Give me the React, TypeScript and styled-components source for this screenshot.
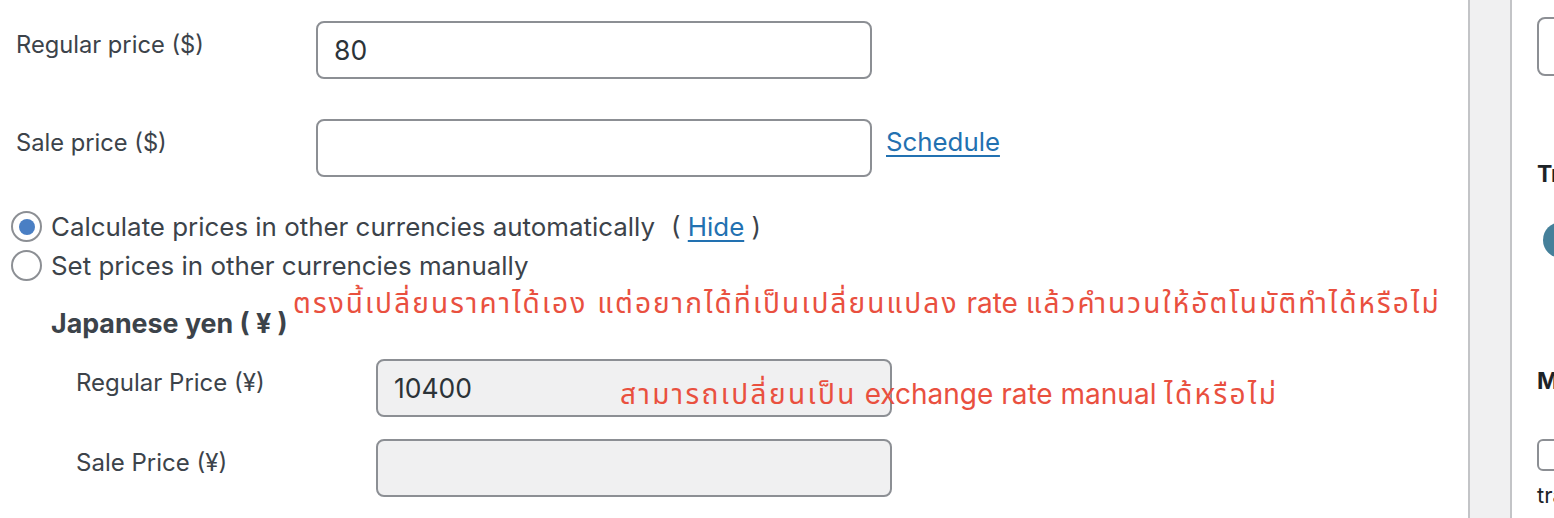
import React from "react";
import styled, { createGlobalStyle } from "styled-components";

const GlobalStyle = createGlobalStyle`
  html, body {
    margin: 0;
    padding: 0;
    background: #ffffff;
    overflow: hidden;
  }
  body {
    font-family: Inter, "Noto Sans", "Noto Sans Thai", "Liberation Sans", sans-serif;
    color: #3c434a;
  }
`;

const Page = styled.div`
  display: grid;
  grid-template-columns: 1468px 44px 1fr;
  width: 1554px;
  height: 518px;
  overflow: hidden;
`;

const Main = styled.div`
  position: relative;
  padding-top: 21px;
  display: flex;
  flex-direction: column;
`;

const Gutter = styled.div`
  background: #f0f0f1;
  border-left: 2px solid #c3c4c7;
  border-right: 2px solid #c3c4c7;
`;

const Side = styled.div`
  padding: 17px 0 0 25px;
  display: flex;
  flex-direction: column;
  overflow: hidden;
  white-space: nowrap;
`;

const FieldRow = styled.div<{ $indent?: number; $gap?: number }>`
  display: flex;
  align-items: flex-start;
  padding-left: ${(p) => p.$indent ?? 16}px;
  margin-bottom: ${(p) => p.$gap ?? 40}px;
`;

const Label = styled.label<{ $width: number; $size?: number }>`
  width: ${(p) => p.$width}px;
  flex: none;
  font-size: ${(p) => p.$size ?? 23.7}px;
  line-height: 26px;
  padding-top: 11px;
  color: #3c434a;
`;

const TextInput = styled.div<{ $width: number; $disabled?: boolean }>`
  box-sizing: border-box;
  width: ${(p) => p.$width}px;
  height: 58px;
  border: 2px solid #8c8f94;
  border-radius: 8px;
  background: ${(p) => (p.$disabled ? "#f0f0f1" : "#ffffff")};
  padding: 0 16px;
  display: flex;
  align-items: center;
  font-size: 26.5px;
  color: #2c3338;
`;

const LinkText = styled.a`
  color: #2271b1;
  text-decoration: underline;
  text-underline-offset: 4px;
  text-decoration-thickness: 2px;
  cursor: pointer;
`;

const ScheduleLink = styled(LinkText)`
  font-size: 25.8px;
  line-height: 30px;
  margin-left: 14px;
  padding-top: 8px;
`;

const RadioList = styled.div`
  display: flex;
  flex-direction: column;
  gap: 8px;
  margin-top: -6px;
  padding-left: 11px;
`;

const RadioRow = styled.div`
  display: flex;
  align-items: center;
  gap: 9px;
  font-size: 25.9px;
  line-height: 31px;
  color: #3c434a;
`;

const RadioCircle = styled.span<{ $checked?: boolean }>`
  box-sizing: border-box;
  width: 31px;
  height: 31px;
  border-radius: 50%;
  border: 2px solid #8c8f94;
  background: #ffffff;
  display: flex;
  align-items: center;
  justify-content: center;
  flex: none;
  &::after {
    content: "";
    width: 16px;
    height: 16px;
    border-radius: 50%;
    background: ${(p) => (p.$checked ? "#4a7fc4" : "transparent")};
  }
`;

const HideWrap = styled.span`
  margin-left: 16px;
`;

const CurrencyHeading = styled.h4`
  margin: 27px 0 0 51px;
  font-size: 26.8px;
  line-height: 30px;
  font-weight: 700;
  color: #3c434a;
`;

const CurrencyFields = styled.div`
  margin-top: 21px;
  display: flex;
  flex-direction: column;
`;

const Annotation = styled.div<{ $x: number; $y: number }>`
  position: absolute;
  left: ${(p) => p.$x}px;
  top: ${(p) => p.$y}px;
  color: #e9503f;
  font-size: 28px;
  line-height: 34px;
  white-space: nowrap;
  pointer-events: none;
`;

const Thai = styled.span<{ $spacing?: number }>`
  letter-spacing: ${(p) => p.$spacing ?? 2.1}px;
`;

const SideInput = styled.div`
  box-sizing: border-box;
  width: 200px;
  height: 59px;
  border: 2px solid #8c8f94;
  border-radius: 8px;
`;

const SideHeading = styled.div<{ $top: number }>`
  margin-top: ${(p) => p.$top}px;
  font-size: 23px;
  font-weight: 700;
  line-height: 28px;
  color: #1d2327;
`;

const TealDot = styled.span`
  display: block;
  margin: 34px 0 0 6px;
  width: 36px;
  height: 36px;
  border-radius: 50%;
  background: #45809a;
`;

const SideCheckbox = styled.span`
  display: block;
  box-sizing: border-box;
  margin-top: 44px;
  width: 32px;
  height: 32px;
  border: 2px solid #8c8f94;
  border-radius: 6px;
`;

const SideText = styled.div`
  margin-top: 10px;
  font-size: 22px;
  line-height: 28px;
  color: #1d2327;
`;

export default function App() {
  return (
    <>
      <GlobalStyle />
      <Page>
        <Main>
          <FieldRow>
            <Label $width={300}>Regular price ($)</Label>
            <TextInput $width={556}>80</TextInput>
          </FieldRow>
          <FieldRow>
            <Label $width={300}>Sale price ($)</Label>
            <TextInput $width={556} />
            <ScheduleLink>Schedule</ScheduleLink>
          </FieldRow>
          <RadioList>
            <RadioRow>
              <RadioCircle $checked />
              <span>
                Calculate prices in other currencies automatically
                <HideWrap>
                  ( <LinkText>Hide</LinkText> )
                </HideWrap>
              </span>
            </RadioRow>
            <RadioRow>
              <RadioCircle />
              <span>Set prices in other currencies manually</span>
            </RadioRow>
          </RadioList>
          <CurrencyHeading>Japanese yen ( ¥ )</CurrencyHeading>
          <CurrencyFields>
            <FieldRow $indent={76} $gap={22}>
              <Label $width={300} $size={24}>
                Regular Price (¥)
              </Label>
              <TextInput $width={516} $disabled>
                10400
              </TextInput>
            </FieldRow>
            <FieldRow $indent={76} $gap={0}>
              <Label $width={300} $size={24}>
                Sale Price (¥)
              </Label>
              <TextInput $width={516} $disabled />
            </FieldRow>
          </CurrencyFields>
          <Annotation $x={293} $y={286}>
            <Thai>ตรงนี้เปลี่ยนราคาได้เอง แต่อยากได้ที่เป็นเปลี่ยนแปลง</Thai> rate{" "}
            <Thai>แล้วคำนวนให้อัตโนมัติทำได้หรือไม่</Thai>
          </Annotation>
          <Annotation $x={620} $y={377}>
            <Thai $spacing={2.4}>สามารถเปลี่ยนเป็น</Thai> exchange rate manual{" "}
            <Thai $spacing={2.4}>ได้หรือไม่</Thai>
          </Annotation>
        </Main>
        <Gutter />
        <Side>
          <SideInput />
          <SideHeading $top={84}>Translation</SideHeading>
          <TealDot />
          <SideHeading $top={109}>Multilingual Content Setup</SideHeading>
          <SideCheckbox />
          <SideText>translate custom fields</SideText>
        </Side>
      </Page>
    </>
  );
}
